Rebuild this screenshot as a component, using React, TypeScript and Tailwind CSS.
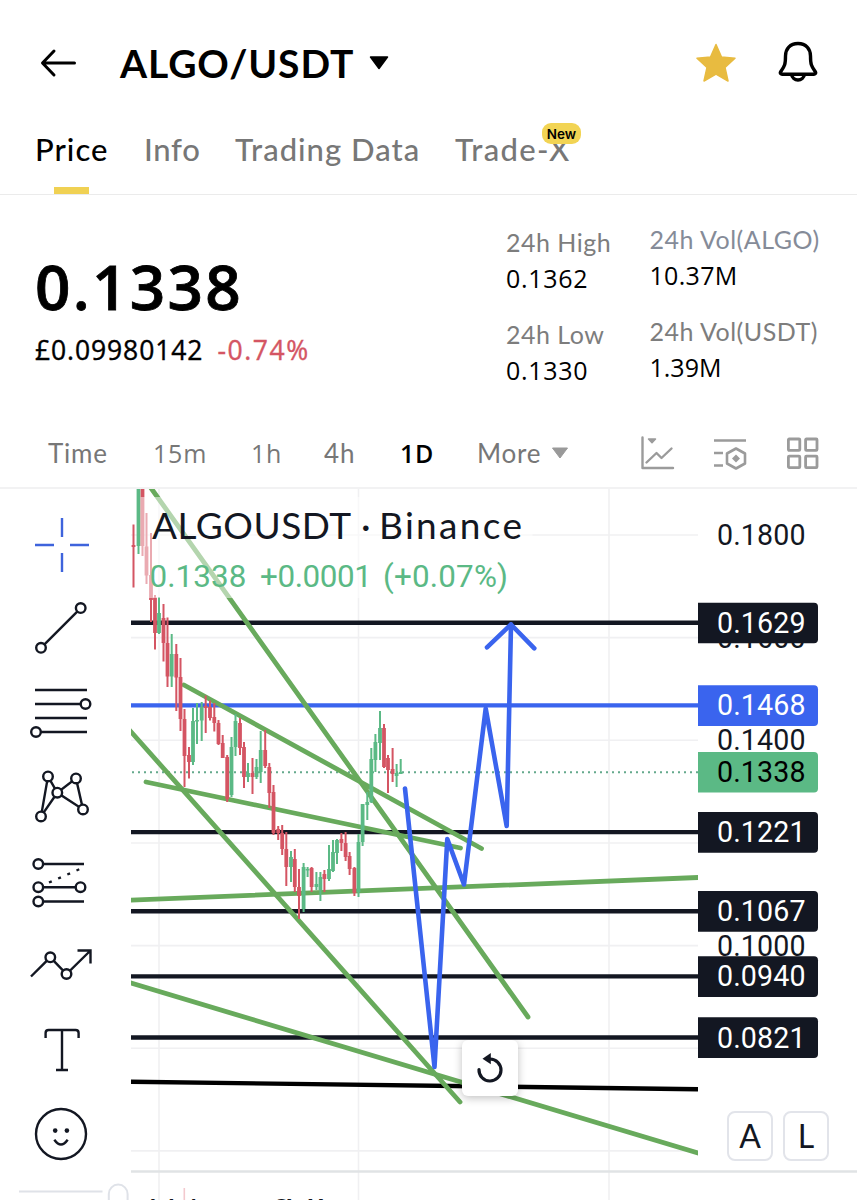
import type { ReactNode } from "react";

const GREEN = "#5bb985";
const RED = "#d45563";
const INK = "#131722";
const TREND = "#68aa5c";
const BLUE = "#3a64ee";

// x, high, low, body top, body bottom, direction
type Candle = [number, number, number, number, number, "u" | "d"];

const candles: Candle[] = [
    [133.5, 524.5, 587.5, 545, 547, "d"],
    [138.5, 480, 554, 480, 546, "u"],
    [142.5, 480, 556, 480, 546, "d"],
    [146.5, 513, 584, 546.5, 575.5, "d"],
    [151, 533, 622, 575, 600, "d"],
    [155, 595, 649.5, 597.5, 633, "d"],
    [159, 597, 634, 613, 633, "u"],
    [163.5, 604, 661.5, 618, 643, "d"],
    [167.5, 617.5, 687, 643, 676.5, "d"],
    [171.7, 634, 687, 654, 676.5, "u"],
    [176.3, 644, 711, 654, 677.5, "d"],
    [180.5, 658, 731, 677, 719, "d"],
    [184.5, 709, 787, 719, 756, "d"],
    [189, 747, 778.5, 755, 762, "d"],
    [193, 708, 765, 721, 762, "u"],
    [197, 703, 744, 720, 721.5, "u"],
    [201.7, 702, 741, 707, 720.5, "u"],
    [205.7, 695.5, 733, 706, 708, "d"],
    [210, 700.5, 720.5, 707, 718, "d"],
    [214.3, 703, 731.5, 717, 723, "d"],
    [218.5, 720, 745, 723, 744, "d"],
    [222.7, 735, 758, 743, 758, "d"],
    [227.2, 755, 802, 757, 799, "d"],
    [231.5, 737, 797, 747, 795, "u"],
    [235.5, 714, 756, 721, 747, "u"],
    [240, 718, 755, 723, 748, "d"],
    [244, 742, 788, 747, 777, "d"],
    [248, 763, 782, 773, 777, "u"],
    [252.5, 758, 794, 773, 777, "d"],
    [256.5, 759, 779, 767, 777, "u"],
    [260.7, 731, 783, 750, 772, "u"],
    [265.2, 730, 768, 750, 766, "d"],
    [269.3, 763, 808, 767, 793, "d"],
    [273.5, 785, 835, 792, 833, "d"],
    [278.2, 826, 840, 829, 833, "d"],
    [282.2, 825, 855, 833, 849, "d"],
    [286.3, 832, 886, 849, 867, "d"],
    [291, 851, 882, 857, 867, "u"],
    [294.8, 849, 892, 859, 887, "d"],
    [299, 869, 919, 887, 896, "d"],
    [303.6, 863, 912, 867, 909, "u"],
    [307.6, 867, 877, 869, 870.5, "u"],
    [311.6, 867, 892, 868, 887, "d"],
    [316.4, 872, 890, 884, 887, "u"],
    [320.4, 872, 901, 877, 890, "u"],
    [324.4, 870, 892, 874, 879, "d"],
    [329, 845, 881, 869, 879, "u"],
    [333, 840, 872, 852, 871, "u"],
    [337, 839, 864, 840, 853, "u"],
    [341.4, 833, 851, 839, 843, "d"],
    [345.6, 832, 861, 843, 857, "d"],
    [349.6, 852, 875, 856, 869, "d"],
    [354.4, 867, 896, 868, 893, "d"],
    [358.5, 834, 897, 842, 892, "u"],
    [362.6, 804, 846, 804, 842, "u"],
    [367.3, 792, 820, 802, 805, "u"],
    [371.3, 748, 803, 759, 802, "u"],
    [375.4, 734, 772, 742, 760, "u"],
    [380, 711, 760, 728, 743, "u"],
    [384, 724, 768, 728, 767, "d"],
    [388, 755, 793, 758, 770, "d"],
    [392.6, 748, 782, 769, 774, "d"],
    [396.6, 764, 787, 773, 776, "u"],
    [400.7, 759, 774, 772, 774, "u"],
];

const trendLines = [
    [151, 488, 528, 1017],
    [184, 685, 481.5, 848.5],
    [146, 782, 460.5, 848],
    [125, 725, 460, 1102],
    [120, 900.5, 710, 877],
    [120, 979.8, 710, 1156.6],
];

const gridPrices = [0.18, 0.16, 0.14, 0.12, 0.1, 0.08, 0.06];

// the remaining grid prices sit fully behind a level tag
const tickLabels = [0.18, 0.16, 0.14, 0.1];

const levels = [
    { price: 0.1629, color: INK, text: "#fff" },
    { price: 0.1468, color: BLUE, text: "#fff" },
    { price: 0.1221, color: INK, text: "#fff" },
    { price: 0.1067, color: INK, text: "#fff" },
    { price: 0.094, color: INK, text: "#fff" },
    { price: 0.0821, color: INK, text: "#fff" },
];

const priceY = (price: number) => 535 + ((0.18 - price) / 0.02) * 102.65;

function PriceTag({ price, color, text }: { price: number; color: string; text: string }) {
    const y = priceY(price);
    return (
        <g>
            <path d={`M698 ${y - 20.1}h116q4 0 4 4v32.6q0 4-4 4h-116z`} fill={color} />
            <text x="717" y={y + 10.1} fontSize="28.6" textLength="88.5" fill={text}>{price.toFixed(4)}</text>
        </g>
    );
}

function PriceChart() {
    return (
        <svg width="726" height="711" viewBox="131 489 726 711" className="block font-[Roboto,sans-serif]">
            <defs>
                <clipPath id="plot">
                    <rect x="131" y="489" width="567" height="682" />
                </clipPath>
            </defs>

            <g stroke="#f0f0f2" strokeWidth="1.6">
                {[159, 358.5, 609].map((x) => <line key={x} x1={x} x2={x} y1="489" y2="1200" />)}
                {gridPrices.map((p) => <line key={p} x1="131" x2="698" y1={priceY(p)} y2={priceY(p)} />)}
            </g>
            <line x1="131" x2="857" y1="1171.5" y2="1171.5" stroke="#e0e3e5" strokeWidth="2.4" />

            <g clipPath="url(#plot)">
                <g strokeWidth="4.4">
                    {levels.map((l) => (
                        <line key={l.price} x1="131" x2="698" y1={priceY(l.price)} y2={priceY(l.price)} stroke={l.color} />
                    ))}
                    <line x1="131" x2="698" y1="1081.7" y2="1089.3" stroke="#000" />
                </g>
                <line x1="132" x2="698" y1="772.3" y2="772.3" stroke="#64a98c" strokeWidth="1.9" strokeDasharray="2 4" />
                <g stroke={TREND} strokeWidth="4.8" strokeLinecap="round">
                    {trendLines.map(([x1, y1, x2, y2]) => <line key={y2} x1={x1} y1={y1} x2={x2} y2={y2} />)}
                </g>
                {candles.map(([x, high, low, top, bottom, dir]) => (
                    <g key={x} fill={dir === "u" ? GREEN : RED}>
                        <rect x={x - 1} y={high} width="2" height={low - high} />
                        <rect x={x - 1.9} y={top} width="3.8" height={bottom - top} />
                    </g>
                ))}
                <g fill="none" stroke={BLUE} strokeWidth="4.6" strokeLinecap="round" strokeLinejoin="round">
                    <path d="M405 788.5L434.5 1067L447.3 839L464 884.5L485.7 708.5L506.7 826L511 624.5" />
                    <path d="M487 647.3L511 624.5L534.3 648.3" />
                </g>
            </g>

            {/* legend, laid over a half transparent backdrop */}
            <rect x="140.6" y="497" width="392" height="101" fill="#fff" fillOpacity="0.5" />
            <g fontSize="37" fill={INK} className="font-[Lato,sans-serif]">
                <text x="152" y="539" textLength="199">ALGOUSDT</text>
                <text x="361" y="539">·</text>
                <text x="379" y="539" textLength="143">Binance</text>
            </g>
            <g fontSize="31.4" fill={GREEN}>
                <text x="149.5" y="586.5" textLength="97">0.1338</text>
                <text x="260" y="586.5" textLength="112">+0.0001</text>
                <text x="383" y="586.5" textLength="125">(+0.07%)</text>
            </g>

            <g fontSize="28.6" fill={INK}>
                {tickLabels.map((p) => (
                    <text key={p} x="717" y={priceY(p) + 10} textLength="88.5">{p.toFixed(4)}</text>
                ))}
            </g>
            <PriceTag price={0.1338} color={GREEN} text="#000" />
            {levels.map((l) => <PriceTag key={l.price} {...l} />)}

            {/* volume pane, cut by the bottom of the screen */}
            <line x1="184.3" x2="184.3" y1="1188" y2="1200" stroke="#f3c9ce" strokeWidth="1.6" />
            <g fill={INK} fontSize="33" className="font-[Lato,sans-serif]">
                <text x="151" y="1222.600" textLength="110">Volume</text>
                <text x="272" y="1222.600" textLength="60">SMA</text>
            </g>
        </svg>
    );
}

function Tool({ children, color = INK }: { children: ReactNode; color?: string }) {
    return (
        <div className="flex h-[84.2px] items-center pl-[30px]">
            <svg width="64" height="64" viewBox="0 0 64 64" fill="none" stroke={color} strokeWidth="2.4">{children}</svg>
        </div>
    );
}

function Dots({ points }: { points: number[][] }) {
    return (
        <g fill="#fff">
            {points.map(([x, y]) => <circle key={`${x}-${y}`} cx={x} cy={y} r="4.8" />)}
        </g>
    );
}

function Toolbar() {
    return (
        <div className="flex h-[711px] w-[131px] shrink-0 flex-col overflow-hidden pt-[14px]">
            <Tool color="#3e63dc"><path d="M32 5v19M32 40v19M5 32h19M40 32h19" /></Tool>
            <Tool>
                <path d="M11 50.8L50.7 11.1" />
                <Dots points={[[11, 50.8], [50.7, 11.1]]} />
            </Tool>
            <Tool>
                <path d="M5 9h52M5 23h50M5 37h52M6 51h51" />
                <Dots points={[[55.5, 23], [6, 51]]} />
            </Tool>
            <Tool>
                <path d="M11 51.4L18 11.4L27.3 27.7L46 13.4L53 44.4L27.3 27.7z" />
                <Dots points={[[18, 11.4], [46, 13.4], [27.3, 27.7], [11, 51.4], [53, 44.4]]} />
            </Tool>
            <Tool>
                <path d="M8 14h46M8 37.2h42M8 51.5h46" />
                <path d="M19 32.5L51 18.5" strokeDasharray="3 7" />
                <Dots points={[[8.3, 14], [8.3, 37.2], [50.5, 37.2], [8.3, 51.5]]} />
            </Tool>
            <Tool>
                <path d="M1 42.5L20.3 23.3L36.5 40L60 17M47.5 16.5h13v13" />
                <Dots points={[[20.3, 23.3], [36.5, 40]]} />
            </Tool>
            <Tool><path d="M15.6 20v-5q0-3 3-3h27q3 0 3 3v5M32 12v40M26 52h12" /></Tool>
            <Tool>
                <circle cx="31" cy="32" r="25" />
                <path d="M24.3 37.8q6.7 9.4 13.4 0" />
                <g fill={INK} stroke="none">
                    <circle cx="25.2" cy="28.6" r="2.3" />
                    <circle cx="36.9" cy="28.6" r="2.3" />
                </g>
            </Tool>
            <svg width="131" height="24" viewBox="0 0 131 24" fill="none" stroke="#dfe2e8" strokeWidth="2" className="shrink-0">
                <path d="M19 15.4h83.5M108.8 24v-6a9.4 9.4 0 0 1 18.8 0v6" />
            </svg>
        </div>
    );
}

interface StatProps {
    label: string;
    value: string;
    labelClass?: string;
    valueClass?: string;
}

function Stat({ label, value, labelClass = "text-[#7d7d7d]", valueClass = "" }: StatProps) {
    return (
        <div className="h-[92.3px] whitespace-nowrap">
            <div className={`text-[25px] leading-[36px] tracking-[0.5px] ${labelClass}`}>{label}</div>
            <div className={`font-['Open_Sans',sans-serif] text-[25px] leading-[36px] text-black ${valueClass}`}>{value}</div>
        </div>
    );
}

export default function App() {
    return (
        <div className="h-[1200px] w-[857px] overflow-hidden bg-white font-[Lato,sans-serif] text-black">
            <header className="flex h-[126px] items-center pr-[38px] pl-[40px]">
                <svg width="38" height="30" viewBox="0 0 38 30" fill="none" stroke="#000" strokeWidth="3" strokeLinecap="round" strokeLinejoin="round">
                    <path d="M34.5 15H3M14 3L2.5 15L14 27" />
                </svg>
                <h1 className="ml-[42px] w-[249px] text-[39px] leading-[50px] font-bold tracking-[0.9px] whitespace-nowrap">ALGO/USDT</h1>
                <svg width="20" height="14" viewBox="0 0 20 14"><path d="M1.5 1h17L10 12.5z" stroke="#000" strokeWidth="1.5" strokeLinejoin="round" /></svg>
                <svg width="40" height="40" viewBox="0 0 40 40" className="ml-auto" fill="#e8bb40" stroke="#e8bb40" strokeWidth="1.5" strokeLinejoin="round">
                    <path d="M20 1.5L25.5 14L39 15.3L29 24.4L32 38L20 31.2L8 38L11 24.4L1 15.3L14.5 14z" />
                </svg>
                <svg width="42" height="44" viewBox="0 0 42 44" className="mb-[2px] ml-[41px]" fill="none" stroke="#000" strokeWidth="3.4" strokeLinejoin="round">
                    <path d="M21 3.5C13 3.5 8.500 9 8.5 16C8.5 25 7.5 26 3.8 31.5C2.8 33 3.3 34.2 5 34.2H37C38.7 34.2 39.2 33 38.2 31.5C34.5 26 33.5 25 33.5 16C33.5 9 29 3.5 21 3.5z" />
                    <path d="M14.5 34.5a6.6 6.6 0 0 0 13 0" />
                </svg>
            </header>

            <nav className="flex h-[69px] border-b-[1.5px] border-[#ebebeb] pl-[35px] text-[31px] leading-[46px] font-medium tracking-[1px] whitespace-nowrap text-[#777]">
                <div className="flex w-[109px] flex-col justify-between text-black">
                    Price
                    <span className="ml-[19px] h-[7px] w-[35px] bg-[#f0d153]" />
                </div>
                <div className="w-[91px] tracking-[0.7px]">Info</div>
                <div className="w-[220px]">Trading Data</div>
                <div className="relative tracking-[1.3px]">
                    Trade-X
                    <span className="absolute top-[-3px] left-[87px] h-[21px] w-[39px] rounded-[9px] bg-[#f2d454] text-center font-[Inter,sans-serif] text-[13.5px] leading-[22px] font-semibold tracking-normal text-black">New</span>
                </div>
            </nav>

            <section className="flex h-[225px] pl-[35px]">
                <div className="w-[471px] pt-[55.5px]">
                    <div className="font-['Open_Sans',sans-serif] text-[62px] leading-[70px] font-semibold tracking-[2.3px] [-webkit-text-stroke:0.8px_#000]">0.1338</div>
                    <div className="mt-[11.5px] flex gap-[14px] font-['Open_Sans',sans-serif] text-[26.5px] leading-[36px] [-webkit-text-stroke:0.4px_currentColor]">
                        <span className="tracking-[0.9px]">£0.09980142</span>
                        <span className="tracking-[1.6px] text-[#d45563]">-0.74%</span>
                    </div>
                </div>
                <div className="w-[143.5px] pt-[29px]">
                    <Stat label="24h High" value="0.1362" valueClass="tracking-[0.7px]" />
                    <Stat label="24h Low" value="0.1330" valueClass="tracking-[0.7px]" />
                </div>
                <div className="pt-[26px]">
                    <Stat label="24h Vol(ALGO)" value="10.37M" labelClass="text-[#858b98]" valueClass="tracking-[0.3px]" />
                    <Stat label="24h Vol(USDT)" value="1.39M" />
                </div>
            </section>

            <div className="flex h-[69px] items-center border-b-2 border-[#f2f2f3] pb-[2px] pl-[48px] text-[26px] leading-[36px] tracking-[0.8px] whitespace-nowrap text-[#777]">
                <span className="w-[105px]">Time</span>
                <span className="w-[98px] font-['Open_Sans',sans-serif] text-[25px]">15m</span>
                <span className="w-[73px] font-['Open_Sans',sans-serif] text-[25px]">1h</span>
                <span className="w-[76px]">4h</span>
                <span className="w-[77px] font-['Open_Sans',sans-serif] text-[25px] font-semibold text-black">1D</span>
                <span className="w-[74px]">More</span>
                <svg width="18" height="12" viewBox="0 0 18 12"><path d="M1.5 1h15L9 11z" fill="#999" stroke="#999" strokeLinejoin="round" /></svg>
                <div className="ml-[70px] flex gap-[38px]">
                    <svg width="36" height="36" viewBox="0 0 36 36" fill="none" stroke="#9b9b9b" strokeWidth="2.4" strokeLinecap="round" strokeLinejoin="round">
                        <path d="M3.5 2.5V33H34M7.5 27.5L17.5 18L22.5 23L32.5 13.5" />
                        <path d="M9.5 4h7l-3.5 3.8z" fill="#9b9b9b" strokeWidth="1.5" />
                    </svg>
                    <svg width="34" height="36" viewBox="0 0 34 36" fill="none" stroke="#9b9b9b" strokeWidth="2.6" strokeLinejoin="round">
                        <path d="M1 5.5h32M1 18h9M1 30.5h9" />
                        <path d="M23 13.5l9 5v10l-9 5l-9-5v-10z" />
                        <path d="M23 19.5l4 4l-4 4l-4-4z" fill="#9b9b9b" stroke="none" />
                    </svg>
                    <svg width="36" height="36" viewBox="0 0 36 36" fill="none" stroke="#9b9b9b" strokeWidth="2.8">
                        <rect x="3.4" y="4" width="11.4" height="11.4" rx="0.8" />
                        <rect x="20.6" y="4" width="11.4" height="11.4" rx="0.8" />
                        <rect x="3.4" y="21.2" width="11.4" height="11.4" rx="0.8" />
                        <rect x="20.6" y="21.2" width="11.4" height="11.4" rx="0.8" />
                    </svg>
                </div>
            </div>

            <main className="flex">
                <Toolbar />
                <div className="relative">
                    <PriceChart />
                    <button className="absolute top-[551px] left-[331px] flex h-[56px] w-[56px] items-center justify-center rounded-[6px] bg-white shadow-[0_2px_8px_rgba(0,0,0,0.25)]">
                        <svg width="28" height="32" viewBox="0 0 28 32" fill="none" stroke={INK} strokeWidth="3.2" strokeLinecap="round">
                            <path d="M3 17.5A11 11 0 1 0 14 7" />
                            <path d="M14.8 1v11.2L6.5 6.8z" fill={INK} stroke="none" />
                        </svg>
                    </button>
                    <div className="absolute top-[622px] left-[596px] flex gap-[10px] text-center text-[32px] leading-[46px] text-[#131722]">
                        <button className="h-[50px] w-[46px] rounded-[8px] border-2 border-[#e2e4ea] bg-white">A</button>
                        <button className="h-[50px] w-[46px] rounded-[8px] border-2 border-[#e2e4ea] bg-white">L</button>
                    </div>
                </div>
            </main>
        </div>
    );
}
